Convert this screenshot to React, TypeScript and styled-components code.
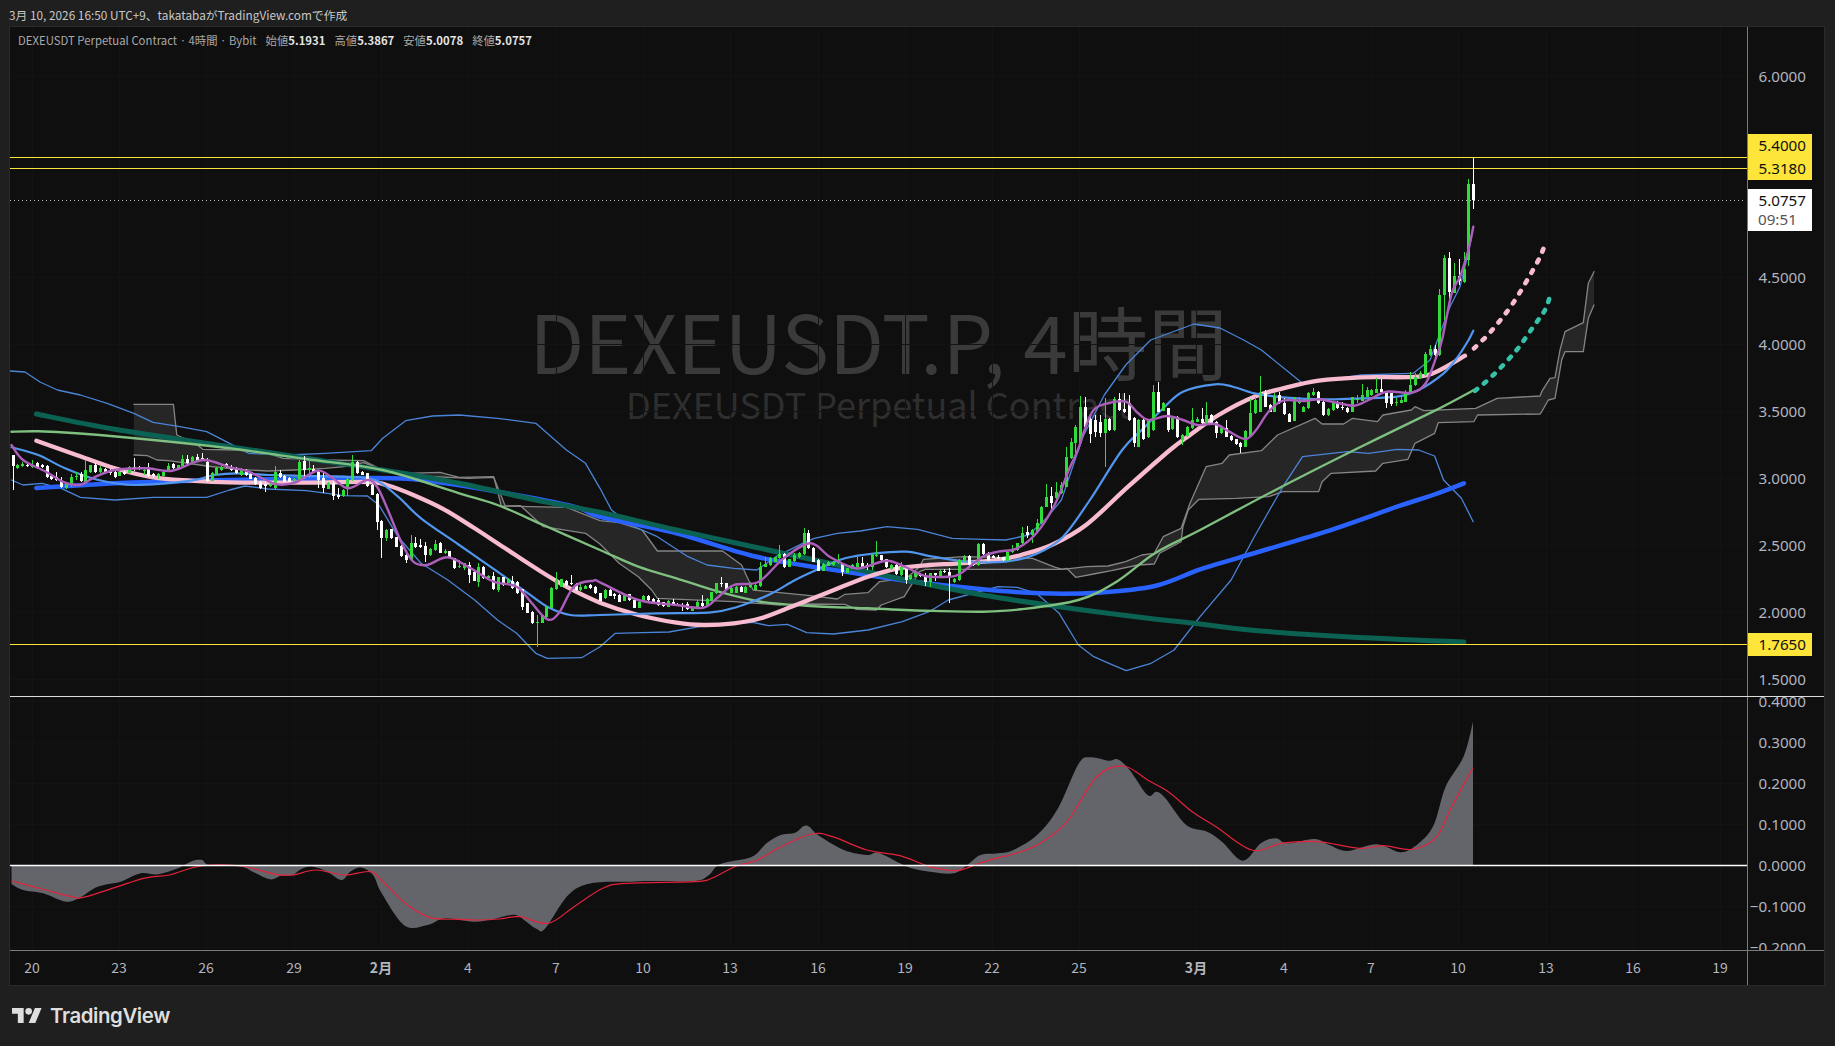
import styled, { createGlobalStyle } from 'styled-components'

type Pt = [number, number]

const JP = `"Noto Sans CJK JP", "Noto Sans", sans-serif`

const GlobalStyle = createGlobalStyle`
  html, body {
    margin: 0;
    padding: 0;
    background: #1f1f1f;
  }
`

const Page = styled.div`
  width: 1835px;
  height: 1046px;
  display: flex;
  flex-direction: column;
  background: #1f1f1f;
  font-family: ${JP};
  overflow: hidden;
`

const Caption = styled.div`
  height: 27px;
  padding: 2px 0 0 9px;
  box-sizing: border-box;
  display: flex;
  align-items: center;
  font-size: 11.8px;
  color: #c8c8c8;
  white-space: nowrap;
`

const Frame = styled.div`
  margin-left: 10px;
  width: 1814px;
  height: 958px;
  display: grid;
  grid-template-columns: 1737px 77px;
  grid-template-rows: 669px 1px 253px 35px;
  background: #0f0f0f;
  box-shadow: 0 0 0 1px #2a2a2a;
`

const Pane = styled.div`
  position: relative;
  overflow: hidden;
`

const ChartSvg = styled.svg`
  position: absolute;
  inset: 0;
  display: block;
`

const Legend = styled.div`
  position: absolute;
  left: 8px;
  top: 5px;
  display: flex;
  gap: 9px;
  font-size: 11.35px;
  line-height: 16px;
  color: #a8a8a8;
  white-space: nowrap;
`

const LegendValue = styled.b`
  color: #e4e4e4;
  font-weight: 700;
`

const Watermark = styled.div`
  position: absolute;
  left: 0;
  right: 0;
  top: 266px;
  text-align: center;
  white-space: nowrap;
`

const WatermarkTitle = styled.div`
  font-size: 80px;
  line-height: 92px;
  color: #3a3a3a;
`

const WatermarkSub = styled.div`
  font-size: 36px;
  line-height: 42px;
  margin-top: -3px;
  color: #2e2e2e;
`

const PriceAxis = styled.div`
  position: relative;
  overflow: hidden;
  border-left: 1px solid #7b7b7b;
`

const Tick = styled.div`
  position: absolute;
  right: 18px;
  transform: translateY(-50%);
  font-family: "Noto Sans", sans-serif;
  font-size: 15.2px;
  line-height: 18px;
  color: #b2b5be;
`

const PriceTag = styled.div`
  position: absolute;
  left: 0;
  width: 64px;
  box-sizing: border-box;
  padding-right: 6px;
  text-align: right;
  font-family: "Noto Sans", sans-serif;
  font-size: 15.2px;
  line-height: 23px;
  color: #111;
  background: #fde53a;
`

const CountdownTag = styled(PriceTag)`
  padding: 2px 6px 2px 0;
  line-height: 19px;
  background: #ffffff;
`

const TagCountdown = styled.div`
  color: #555;
  text-align: left;
  padding-left: 10px;
`

const Divider = styled.div`
  grid-column: 1 / 3;
  background: #dcdcdc;
`

const TimeAxis = styled.div`
  position: relative;
  border-top: 1px solid #7b7b7b;
`

const AxisCorner = styled.div`
  border-top: 1px solid #7b7b7b;
  border-left: 1px solid #7b7b7b;
`

const TimeLabel = styled.div<{ $strong?: boolean }>`
  position: absolute;
  top: 16px;
  transform: translate(-50%, -50%);
  font-family: ${JP};
  font-size: 14px;
  font-weight: ${p => (p.$strong ? 700 : 400)};
  color: #b2b5be;
`

const Footer = styled.div`
  flex: 1;
  display: flex;
  align-items: center;
  gap: 8px;
  padding-left: 12px;
`

const Wordmark = styled.span`
  font-family: Inter, sans-serif;
  font-size: 20.4px;
  font-weight: 600;
  letter-spacing: -0.4px;
  color: #dedede;
`

// the zoomed crops I read the chart from, back to page pixels
const z2 = (x: number, y: number): Pt => [1380 + x / 3, 130 + y / 3]
const z4 = (x: number, y: number): Pt => [x / 2.613, 390 + y / 3]
const z5 = (x: number, y: number): Pt => [600 + x / 2.613, 450 + y / 3]
const z6 = (x: number, y: number): Pt => [1040 + x / 2.8, 340 + y / 3]
const z7 = (x: number, y: number): Pt => [x / 1.742, 690 + y / 3]
const z8 = (x: number, y: number): Pt => [900 + x / 1.677, 690 + y / 3]

const pts = (fn: (x: number, y: number) => Pt, list: number[]): Pt[] => {
  const out: Pt[] = []
  for (let i = 0; i < list.length; i += 2) out.push(fn(list[i], list[i + 1]))
  return out
}

const straight = (p: Pt[]) => 'M' + p.map(q => `${q[0].toFixed(1)} ${q[1].toFixed(1)}`).join('L')

const smooth = (p: Pt[]) => {
  let d = `M${p[0][0].toFixed(1)} ${p[0][1].toFixed(1)}`
  for (let i = 0; i < p.length - 1; i++) {
    const a = p[Math.max(i - 1, 0)]
    const b = p[i]
    const c = p[i + 1]
    const e = p[Math.min(i + 2, p.length - 1)]
    const c1 = [b[0] + (c[0] - a[0]) / 6, b[1] + (c[1] - a[1]) / 6]
    const c2 = [c[0] - (e[0] - b[0]) / 6, c[1] - (e[1] - b[1]) / 6]
    d += `C${c1[0].toFixed(1)} ${c1[1].toFixed(1)} ${c2[0].toFixed(1)} ${c2[1].toFixed(1)} ${c[0].toFixed(1)} ${c[1].toFixed(1)}`
  }
  return d
}

const maTeal: Pt[] = [
  ...pts(z4, [95, 72, 300, 118, 600, 170, 800, 205, 1000, 240, 1200, 280, 1400, 330, 1568, 367]),
  ...pts(z5, [200, 240, 400, 290, 600, 340, 800, 390, 1000, 435, 1200, 470, 1400, 500, 1568, 522]),
  [1250, 630], [1350, 637], [1464, 642],
]

const maBlue: Pt[] = [
  ...pts(z4, [95, 294, 300, 280, 500, 272, 700, 268, 960, 264, 1100, 270, 1300, 305, 1500, 350]),
  ...pts(z5, [0, 200, 200, 250, 400, 318, 600, 358, 800, 392, 1000, 418, 1150, 430, 1300, 428, 1450, 408, 1568, 358]),
  ...pts(z6, [560, 652, 800, 575, 1000, 500, 1100, 465, 1187, 430]),
]

const maPink: Pt[] = [
  ...pts(z4, [95, 152, 200, 195, 300, 235, 400, 262, 500, 272, 600, 277, 800, 278, 960, 276, 1010, 285, 1080, 315, 1160, 358, 1240, 415, 1320, 475, 1400, 535, 1480, 590]),
  ...pts(z5, [0, 458, 100, 495, 200, 518, 270, 525, 350, 520, 420, 505, 500, 470, 600, 425, 700, 380, 780, 355, 860, 345, 940, 340, 1040, 330, 1100, 315, 1180, 285, 1270, 225, 1380, 110]),
  ...pts(z6, [364, 330, 420, 285, 500, 225, 600, 170, 680, 145, 780, 122, 900, 112, 1060, 110, 1120, 90, 1190, 47]),
]
const pinkForecast = pts(z2, [282, 655, 332, 605, 400, 518, 470, 400, 492, 352])
const tealForecast = pts(z2, [285, 782, 340, 735, 410, 660, 460, 590, 495, 540, 510, 498])

const maGreen: Pt[] = [
  ...pts(z4, [30, 125, 100, 124, 200, 130, 400, 150, 600, 175, 800, 207, 1000, 240, 1200, 310, 1300, 345, 1420, 405]),
  ...pts(z5, [0, 300, 100, 350, 200, 385, 310, 425, 420, 455, 540, 467, 700, 475, 850, 482, 1000, 485, 1100, 478, 1250, 450, 1350, 395, 1450, 310, 1568, 240]),
  ...pts(z6, [650, 455, 880, 330, 1100, 215, 1215, 150]),
]

const maPurple: Pt[] = [
  ...pts(z4, [30, 165, 60, 210, 120, 245, 170, 278, 210, 284, 250, 260, 300, 240, 380, 235, 450, 242, 530, 210, 600, 232, 650, 245, 720, 282, 770, 278, 830, 242, 870, 265, 910, 295, 960, 270, 985, 290, 1010, 350, 1050, 460, 1080, 515, 1115, 525, 1170, 502, 1230, 535, 1290, 575, 1350, 590, 1390, 640, 1430, 688, 1460, 670, 1500, 590, 1550, 572]),
  ...pts(z5, [0, 397, 100, 450, 200, 465, 270, 473, 310, 440, 350, 405, 415, 395, 480, 325, 550, 280, 600, 320, 660, 353, 690, 352, 750, 332, 800, 352, 850, 378, 910, 380, 940, 372, 1000, 320, 1040, 305, 1090, 295, 1140, 250, 1190, 160, 1225, 60]),
  ...pts(z6, [106, 330, 125, 270, 150, 210, 190, 190, 240, 185, 275, 220, 305, 240, 355, 228, 400, 240, 440, 255, 490, 252, 530, 275, 575, 297, 605, 270, 640, 215, 680, 182, 740, 183, 780, 178, 830, 188, 880, 197, 920, 180, 970, 155, 1040, 158, 1080, 130, 1110, 50]),
  ...pts(z2, [186, 630, 215, 490, 240, 440, 265, 360, 280, 290]),
]

const bandMid: Pt[] = [
  ...pts(z4, [30, 172, 100, 195, 170, 235, 250, 268, 350, 285, 500, 272, 560, 255, 620, 250, 700, 255, 800, 258, 900, 260, 980, 270, 1040, 320, 1100, 385, 1200, 465, 1300, 545, 1380, 610, 1430, 650, 1490, 675]),
  ...pts(z5, [0, 495, 150, 490, 290, 487, 360, 470, 440, 435, 510, 390, 570, 358, 640, 325, 720, 310, 800, 305, 870, 320, 960, 335, 1060, 335, 1140, 312, 1210, 260, 1280, 150]),
  ...pts(z6, [230, 330, 290, 265, 340, 210, 400, 155, 490, 133, 540, 140, 600, 160, 680, 172, 800, 178, 900, 175, 1000, 170, 1060, 150, 1130, 100, 1170, 50, 1200, 0]),
  ...pts(z2, [280, 602]),
]

const bandUpper: Pt[] = [
  [10, 371], [25, 372], [40, 382],
  ...pts(z4, [150, 0, 210, 15, 280, 40, 350, 70, 400, 97, 470, 110, 540, 125, 600, 160, 650, 190, 750, 195, 850, 190, 970, 182, 1000, 145, 1060, 92, 1130, 78, 1200, 75, 1300, 85, 1400, 100, 1480, 180, 1530, 220]),
  ...pts(z5, [0, 115, 30, 180, 80, 225, 150, 260, 230, 320, 280, 345, 350, 355, 410, 360, 460, 320, 530, 280, 560, 265, 620, 250, 680, 243, 750, 230, 830, 238, 920, 265, 1000, 268, 1060, 270, 1120, 255, 1170, 200]),
  ...pts(z6, [60, 480, 120, 290, 180, 165, 240, 75, 310, 0]),
  [1194, 324], [1220, 328],
  ...pts(z6, [570, 0, 620, 30, 735, 130, 790, 122, 900, 105, 1040, 100]),
  ...pts(z2, [100, 730, 150, 690, 210, 530, 240, 470, 265, 370, 280, 290]),
]

const bandLower: Pt[] = [
  ...pts(z4, [30, 270, 60, 285, 110, 280, 160, 295, 210, 322, 300, 330, 400, 322, 540, 322, 600, 300, 640, 288, 700, 297, 800, 302, 900, 317, 960, 318, 990, 345, 1040, 440, 1100, 520, 1170, 570, 1240, 630, 1300, 690, 1350, 730, 1400, 790, 1430, 805, 1520, 803]),
  ...pts(z5, [0, 590, 40, 550, 110, 548, 180, 546, 260, 530, 400, 517, 440, 527, 490, 523, 540, 548, 610, 552, 700, 540, 790, 515, 860, 485, 910, 450, 1040, 410, 1090, 412, 1140, 430, 1200, 490, 1250, 585, 1290, 620, 1330, 640, 1375, 662, 1440, 640, 1500, 600, 1568, 500]),
  ...pts(z6, [535, 720, 600, 590, 680, 440, 735, 350, 860, 335, 920, 340, 1000, 328, 1060, 330, 1105, 348, 1130, 420, 1180, 475, 1213, 545]),
]

const spanA: Pt[] = [
  ...pts(z4, [350, 43, 453, 43, 462, 135, 510, 160, 530, 178, 620, 180, 700, 190, 740, 205, 850, 210, 950, 212, 990, 235, 1060, 250, 1150, 247, 1200, 262, 1290, 260, 1310, 348, 1480, 352]),
  ...pts(z5, [0, 212, 50, 218, 110, 240, 150, 303, 320, 303, 370, 345, 400, 420, 470, 428, 550, 437, 620, 447, 640, 433, 700, 428, 730, 395, 800, 385, 835, 350, 845, 328, 950, 320, 1130, 325, 1190, 352]),
  ...pts(z6, [64, 688, 130, 680, 190, 678, 240, 665, 285, 645, 320, 640, 345, 590, 395, 565, 420, 490, 465, 380, 510, 370, 530, 345, 620, 332, 665, 285, 770, 235, 790, 252, 850, 252, 875, 235, 945, 245, 960, 225, 1040, 210, 1050, 200, 1075, 212, 1220, 205, 1280, 175, 1400, 168]),
  ...pts(z2, [485, 785, 510, 745, 525, 743, 540, 660, 555, 605, 610, 578, 625, 460, 642, 425]),
]

const spanB: Pt[] = [
  ...pts(z4, [350, 195, 385, 197, 410, 210, 440, 212, 540, 228, 620, 238, 700, 243, 770, 240, 850, 235, 900, 230, 950, 218, 1000, 240, 1100, 258, 1225, 265, 1290, 262, 1320, 348, 1360, 347, 1420, 410, 1530, 430]),
  ...pts(z5, [0, 282, 50, 340, 100, 380, 135, 420, 150, 445, 350, 455, 470, 465, 540, 462, 640, 463, 670, 478, 722, 480, 735, 465, 795, 440, 835, 365, 850, 358, 960, 358, 1205, 358]),
  ...pts(z6, [75, 685, 100, 712, 150, 702, 200, 692, 275, 675, 320, 672, 335, 640, 395, 605, 400, 560, 415, 510, 445, 478, 550, 475, 640, 470, 680, 455, 780, 455, 790, 425, 815, 400, 940, 393, 960, 370, 1030, 358, 1050, 310, 1105, 280, 1115, 248, 1215, 245, 1225, 225, 1400, 222]),
  ...pts(z2, [485, 845, 505, 810, 525, 805, 545, 690, 555, 665, 610, 665, 625, 565, 642, 525]),
]

const oscArea: Pt[] = [
  ...pts(z7, [20, 582, 40, 600, 75, 610, 115, 635, 140, 622, 170, 590, 210, 575, 245, 550, 275, 553, 310, 535, 335, 513, 352, 510, 365, 525, 420, 530, 440, 545, 470, 568, 490, 557, 510, 555, 525, 537, 545, 530, 570, 545, 595, 570, 610, 545, 630, 533, 650, 555, 665, 610, 705, 707, 745, 705, 775, 685, 825, 695, 860, 687, 890, 675, 905, 680, 935, 717, 950, 715, 990, 615, 1030, 580, 1100, 575, 1130, 573, 1210, 573, 1235, 555, 1255, 522, 1310, 500, 1335, 460, 1360, 435, 1385, 428, 1400, 408, 1410, 410, 1425, 435, 1470, 480, 1510, 495, 1530, 488]),
  ...pts(z8, [0, 520, 20, 535, 50, 545, 90, 550, 115, 522, 135, 495, 165, 490, 190, 480, 230, 435, 265, 355, 300, 220, 320, 202, 350, 212, 365, 208, 385, 240, 415, 315, 430, 305, 445, 325, 480, 405, 515, 425, 540, 455, 575, 512, 605, 460, 630, 445, 650, 460, 695, 447, 720, 465, 750, 483, 800, 463, 840, 487, 870, 460, 895, 405, 915, 290, 945, 200, 961, 95]),
]

const oscSignal: Pt[] = [
  ...pts(z7, [20, 573, 80, 600, 125, 620, 150, 620, 250, 565, 295, 555, 350, 528, 420, 528, 480, 553, 510, 555, 550, 540, 600, 555, 645, 545, 670, 580, 710, 645, 750, 683, 800, 688, 830, 690, 870, 687, 905, 680, 955, 700, 1000, 650, 1050, 595, 1090, 580, 1210, 575, 1240, 565, 1280, 530, 1320, 510, 1360, 470, 1415, 432, 1450, 440, 1510, 480]),
  ...pts(z8, [0, 497, 50, 530, 95, 542, 130, 522, 160, 505, 195, 490, 235, 460, 280, 395, 330, 260, 375, 228, 415, 270, 450, 305, 490, 365, 530, 410, 590, 480, 640, 460, 700, 455, 770, 475, 810, 467, 860, 478, 900, 440, 925, 350, 961, 233]),
]

// open close high low in crop units; white when close sits under open
const barsA = `195 228 195 300,235 225 222 237,228 222 216 232,224 228 218 232,230 225 210 234,220 232,225 232 222 234,228 260,258 266 255 270,262 270 246 272,272 290 262 293,295 282 278 298,285 262 252 290,262 258 245 270,252 272 245 275,275 240 210 280,245 226 224 250,225 245 220 248,246 233 228 248,237 247 233 250,240 250,246 260 242 264,257 245 241 259,245 252 240 256,250 232 228 252,232 238 205 242,232 236 229 240,243 240 232 255,237 258 220 260,253 258 250 265,258 253 250 268,258 246 243 262,240 228 218 242,222 235 220 236,234 226 224 238,228 208 195 232,208 220 195 222,220 200 197 222,202 212 192 214,205 212 188 214,216 274 205 276,272 250 247 274,252 235 230 254,240 232 226 242,222 230 218 234,230 240 226 242,235 250 232 252,255 238 235 257,240 255 238 257,252 266 248 268,264 283 262 285,276 293 272 296,282 288 272 305,287 283 278 290,295 245 228 300,248 262 240 264,258 275 256 277,265 275 262 277,275 267 265 277,270 215 210 272,212 240 198 268,240 235 208 265,238 248 225 250,246 270 244 295,265 295 250 308,296 280 276 298,278 318 274 330,315 320 295 328,318 300 298 320,295 268 260 318,270 215 195 272,215 250 213 252,246 255 244 256,250 288 248 290,285 315 283 316,312 395 310 420,393 444 391 505,445 420 418 452,418 445 416 447,442 470 440 472,468 498 466 500,495 510 480 520,510 460 435 512,458 470 442 474,465 470 448 474,467 495 455 515,495 477 475 497,480 462 450 482,458 488 456 490,490 482 478 492,484 502 482 504,505 535 503 537,532 528 510 534,535 520 518 540,525 555 515 578,545 572 543 574,575 530 518 590,530 565 528 567,565 558 555 568,558 598 546 600,600 562 560 605,562 585 560 587,578 568 565 580,572 595 558 597,575 610 572 612,598 650 596 660,640 668 638 670,665 700 663 702,698 695 675 772,698 675 673 700,682 650 648 684,655 593 591 657,597 570 545 599,590 568 566 592,573 585 570 587,578 582 555 584,582 600 580 602,600 592 575 602,596 588 586 598,585 595 583 597,590 610 588 612`

const barsB = `430 452 428 454,445 420 418 447,420 437 418 439,432 437 428 448,435 455 433 457,452 435 433 454,433 450 431 452,450 473 448 475,473 455 453 475,455 438 436 457,438 450 436 452,446 455 444 457,450 465 444 467,457 468 455 470,470 452 450 472,455 465 448 467,462 465 460 467,465 470 460 482,462 478 455 480,482 472 470 484,470 455 450 472,458 468 435 470,468 448 445 470,452 427 425 454,430 400 398 432,400 403 380 410,400 417 398 419,428 415 410 430,428 410 408 430,410 425 408 427,428 410 408 430,410 402 395 415,420 405 400 422,408 350 335 410,350 342 322 352,345 325 320 347,335 322 320 337,325 312 285 327,312 350 310 353,350 328 326 352,333 315 310 335,322 310 305 324,312 250 235 314,250 295 240 297,293 335 291 337,330 362 328 364,362 342 340 364,347 335 333 349,345 335 333 347,340 335 312 342,340 365 338 378,368 355 353 370,356 345 343 358,350 340 322 352,340 350 320 352,345 350 338 360,350 315 313 360,318 315 272 320,316 330 314 332,328 352 326 354,358 345 343 360,345 372 343 376,375 352 335 377,352 390 350 402,388 376 374 390,380 365 363 382,372 378 370 382,380 395 370 408,395 370 368 412,370 375 368 392,378 362 360 380,362 366 358 370,365 380 355 458,395 386 384 400,390 330 328 392,335 318 316 337,318 345 316 347,340 344 335 348,345 282 278 347,282 312 278 314,312 330 305 332,318 323 315 325,320 323 315 326,322 330 320 333,332 305 303 334,306 298 285 308,300 280 278 302,280 248 230 282,245 255 228 265,255 240 238 278,245 220 208 247`

const barsC = `550 500 498 552,500 470 432 502,468 490 440 510,475 455 425 477,460 435 425 462,440 350 322 442,355 305 293 357,310 260 255 355,308 200 168 310,200 262 170 265,238 283 225 310,240 275 225 290,245 280 225 292,280 238 175 382,238 270 235 272,270 178 172 272,178 210 160 212,208 215 160 218,190 240 165 242,235 310 232 322,320 240 238 322,240 298 236 300,292 240 238 294,270 155 135 272,155 215 125 217,212 188 185 214,205 270 203 275,268 235 233 270,230 292 228 294,300 285 283 315,288 260 258 290,265 240 203 267,245 236 232 247,236 250 205 252,250 225 185 252,225 250 223 252,245 278 243 295,280 265 263 282,265 290 240 292,288 300 286 302,298 312 296 314,308 322 306 338,320 272 270 322,288 220 178 290,220 180 170 222,215 160 108 217,160 200 150 202,195 215 193 217,215 168 160 217,165 190 155 192,188 222 175 224,222 245 220 247,242 172 170 244,190 180 172 192,215 200 198 217,205 158 156 207,165 155 145 167,155 190 153 192,185 225 183 227,225 206 204 227,210 190 188 212,185 204 183 206,200 204 187 210,204 215 200 218,215 172 170 217,180 178 165 190,182 165 132 184,170 150 140 172,165 150 148 167,158 147 115 160,147 155 118 157,155 190 153 203,160 192 158 198,190 185 175 197,188 180 165 190,185 155 150 187`

const barsD = `790 765 725 792,765 740 730 767,745 730 722 747,735 672 665 737,675 658 645 677,658 675 645 690,675 495 478 677,495 385 375 570,385 485 365 530,488 438 400 490,438 452 388 465,455 418 365 458,390 162 148 408,162 210 84 236`

const parseBars = (src: string, base: number) =>
  src.split(',').map(s => {
    const n = s.trim().split(' ').map(Number).map(v => base + v / 3)
    const [o, c] = n
    return { o, c, h: n[2] ?? Math.min(o, c) - 1.5, l: n[3] ?? Math.max(o, c) + 1.5 }
  })

const bars = [...parseBars(barsA, 390), ...parseBars(barsB, 450), ...parseBars(barsC, 340), ...parseBars(barsD, 130)]
const barX = (i: number) => Math.round(12.6 + 4.853 * i)

const priceY = (p: number) => 679 - (p - 1.5) * 134

const priceTicks = ['6.0000', '4.5000', '4.0000', '3.5000', '3.0000', '2.5000', '2.0000', '1.5000']
const oscTicks: [string, number][] = [['0.4000', 701], ['0.3000', 742], ['0.2000', 783], ['0.1000', 824], ['0.0000', 865], ['−0.1000', 906], ['−0.2000', 947]]
const timeTicks: [string, number, boolean?][] = [
  ['20', 32], ['23', 119], ['26', 206], ['29', 294], ['2月', 381, true], ['4', 468], ['7', 556], ['10', 643], ['13', 730], ['16', 818], ['19', 905],
  ['22', 992], ['25', 1079], ['3月', 1196, true], ['4', 1284], ['7', 1371], ['10', 1458], ['13', 1546], ['16', 1633], ['19', 1720],
]

function GridLines({ y1, y2, rows }: { y1: number; y2: number; rows: number[] }) {
  return (
    <g stroke="#131313" strokeWidth="1" shapeRendering="crispEdges">
      {timeTicks.map(t => <line key={t[1]} x1={t[1]} x2={t[1]} y1={y1} y2={y2} />)}
      {rows.map(r => <line key={r} x1="10" x2="1747" y1={r} y2={r} />)}
    </g>
  )
}

function Candles() {
  return (
    <g shapeRendering="crispEdges">
      {bars.map((b, i) => {
        const x = barX(i)
        const up = b.c < b.o
        const fill = up ? '#2fdc3a' : '#ffffff'
        const top = Math.min(b.o, b.c)
        return (
          <g key={i} fill={fill}>
            <rect x={x} y={b.h} width="1" height={Math.max(b.l - b.h, 1)} />
            <rect x={x - 1} y={top} width="3" height={Math.max(Math.abs(b.o - b.c), 1)} />
          </g>
        )
      })}
    </g>
  )
}

function MainChart() {
  return (
    <ChartSvg width="1737" height="669" viewBox="10 27 1737 669">
      <GridLines y1={27} y2={696} rows={priceTicks.map(p => priceY(parseFloat(p)))} />
      <g fill="none" strokeLinejoin="round" strokeLinecap="round">
        <path d={straight([...spanA, ...[...spanB].reverse()]) + 'Z'} fill="#262626" fillRule="evenodd" />
        <path d={straight(spanA)} stroke="#858585" strokeWidth="1.3" />
        <path d={straight(spanB)} stroke="#858585" strokeWidth="1.3" />
        <path d={straight(bandUpper)} stroke="#4a84d8" strokeWidth="1.3" />
        <path d={straight(bandLower)} stroke="#4a84d8" strokeWidth="1.3" />
        <path d={smooth(maBlue)} stroke="#2962ff" strokeWidth="4.5" />
        <path d={smooth(maTeal)} stroke="#0b6152" strokeWidth="5" />
        <path d={smooth(maGreen)} stroke="#7fbf7f" strokeWidth="2.4" />
        <path d={smooth(maPink)} stroke="#f8bbd0" strokeWidth="4.3" />
        <path d={smooth(bandMid)} stroke="#5196ee" strokeWidth="2.2" />
        <path d={smooth(pinkForecast)} stroke="#f8bbd0" strokeWidth="4.6" strokeDasharray="3 8.9" />
        <path d={smooth(tealForecast)} stroke="#37c1a8" strokeWidth="4.6" strokeDasharray="3 8.6" />
      </g>
      <g stroke="#fbe53c" strokeWidth="1" shapeRendering="crispEdges">
        <line x1="10" x2="1747" y1="157.5" y2="157.5" />
        <line x1="10" x2="1747" y1="168.5" y2="168.5" />
        <line x1="10" x2="1747" y1="644.5" y2="644.5" />
      </g>
      <line x1="10" x2="1745" y1="200.5" y2="200.5" stroke="#bdbdbd" strokeWidth="1" strokeDasharray="1 3" />
      <Candles />
      <path d={smooth(maPurple)} fill="none" stroke="#ab5fba" strokeWidth="2.4" strokeLinecap="round" />
    </ChartSvg>
  )
}

function OscChart() {
  const last = oscArea[oscArea.length - 1]
  return (
    <ChartSvg width="1737" height="253" viewBox="10 697 1737 253">
      <GridLines y1={697} y2={950} rows={oscTicks.map(t => t[1])} />
      <path d={`${smooth(oscArea)}L${last[0]} 865L${oscArea[0][0]} 865Z`} fill="#63656b" />
      <path d={smooth(oscSignal)} fill="none" stroke="#e5233c" strokeWidth="1.2" />
      <line x1="10" x2="1747" y1="865.5" y2="865.5" stroke="#ffffff" strokeWidth="1.5" />
    </ChartSvg>
  )
}

function App() {
  return (
    <Page>
      <GlobalStyle />
      <Caption>3月 10, 2026 16:50 UTC+9、takatabaがTradingView.comで作成</Caption>
      <Frame>
        <Pane>
          <Watermark>
            <WatermarkTitle>DEXEUSDT.P, 4時間</WatermarkTitle>
            <WatermarkSub>DEXEUSDT Perpetual Contract</WatermarkSub>
          </Watermark>
          <MainChart />
          <Legend>
            <span>DEXEUSDT Perpetual Contract · 4時間 · Bybit</span>
            <span>始値<LegendValue>5.1931</LegendValue></span>
            <span>高値<LegendValue>5.3867</LegendValue></span>
            <span>安値<LegendValue>5.0078</LegendValue></span>
            <span>終値<LegendValue>5.0757</LegendValue></span>
          </Legend>
        </Pane>
        <PriceAxis>
          {priceTicks.map(p => (
            <Tick key={p} style={{ top: priceY(parseFloat(p)) - 27 }}>{p}</Tick>
          ))}
          <PriceTag style={{ top: 107 }}>5.4000</PriceTag>
          <PriceTag style={{ top: 130 }}>5.3180</PriceTag>
          <CountdownTag style={{ top: 162 }}>
            5.0757
            <TagCountdown>09:51</TagCountdown>
          </CountdownTag>
          <PriceTag style={{ top: 606 }}>1.7650</PriceTag>
        </PriceAxis>
        <Divider />
        <Pane>
          <OscChart />
        </Pane>
        <PriceAxis>
          {oscTicks.map(([label, y]) => (
            <Tick key={label} style={{ top: y - 697 }}>{label}</Tick>
          ))}
        </PriceAxis>
        <TimeAxis>
          {timeTicks.map(([label, x, strong]) => (
            <TimeLabel key={x} $strong={strong} style={{ left: x - 10 }}>{label}</TimeLabel>
          ))}
        </TimeAxis>
        <AxisCorner />
      </Frame>
      <Footer>
        <svg width="30" height="15" viewBox="0 7 36 18" fill="#dedede">
          <path d="M14 25H7V14H0V7h14v18zM28 25h-8l7.5-18h8L28 25z" />
          <circle cx="20" cy="11" r="4" />
        </svg>
        <Wordmark>TradingView</Wordmark>
      </Footer>
    </Page>
  )
}

export default App
